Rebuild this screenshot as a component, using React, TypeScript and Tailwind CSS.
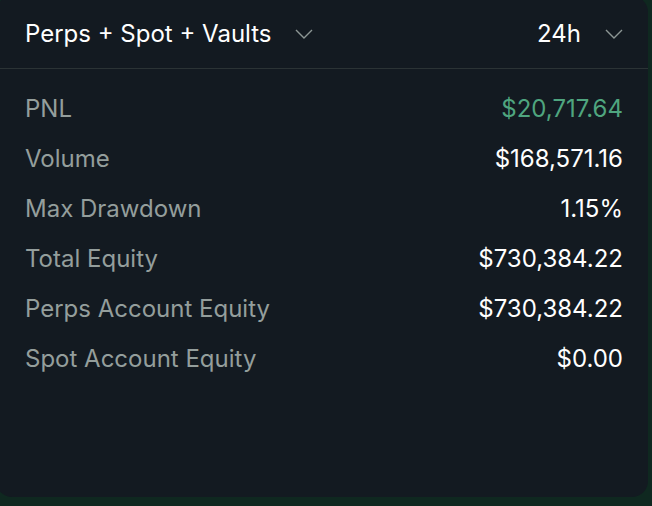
import React from 'react';

const rows = [
  { label: 'PNL', value: '$20,717.64', green: true },
  { label: 'Volume', value: '$168,571.16' },
  { label: 'Max Drawdown', value: '1.15%' },
  { label: 'Total Equity', value: '$730,384.22' },
  { label: 'Perps Account Equity', value: '$730,384.22' },
  { label: 'Spot Account Equity', value: '$0.00' },
];

const Chevron = () => (
  <svg width="18" height="10" viewBox="0 0 18 10" fill="none" className="text-[#8c9694]">
    <path d="M1 1l8 8 8-8" stroke="currentColor" strokeWidth="1.4" />
  </svg>
);

export default function App() {
  return (
    <div className="w-[652px] h-[506px] overflow-hidden bg-[#0f2820] font-['Inter',sans-serif]">
      <div className="-mt-[4px] -ml-[4px] w-[652px] h-[501px] rounded-[16px] bg-[#131a21]">
        <div className="flex items-center justify-between h-[73px] pt-[4px] pl-[29px] pr-[25px] border-b border-[#2b3335]">
          <div className="flex items-center gap-[23px]">
            <span className="text-[24px] text-white">Perps + Spot + Vaults</span>
            <Chevron />
          </div>
          <div className="flex items-center gap-[24px]">
            <span className="text-[24px] text-white">24h</span>
            <Chevron />
          </div>
        </div>
        <div className="flex flex-col pt-[15px] pl-[29px] pr-[25px]">
          {rows.map((r) => (
            <div key={r.label} className="flex items-center justify-between h-[50px] text-[24px]">
              <span className="text-[#949e9c]">{r.label}</span>
              <span className={r.green ? 'text-[#4fa57f]' : 'text-white'}>{r.value}</span>
            </div>
          ))}
        </div>
      </div>
    </div>
  );
}
